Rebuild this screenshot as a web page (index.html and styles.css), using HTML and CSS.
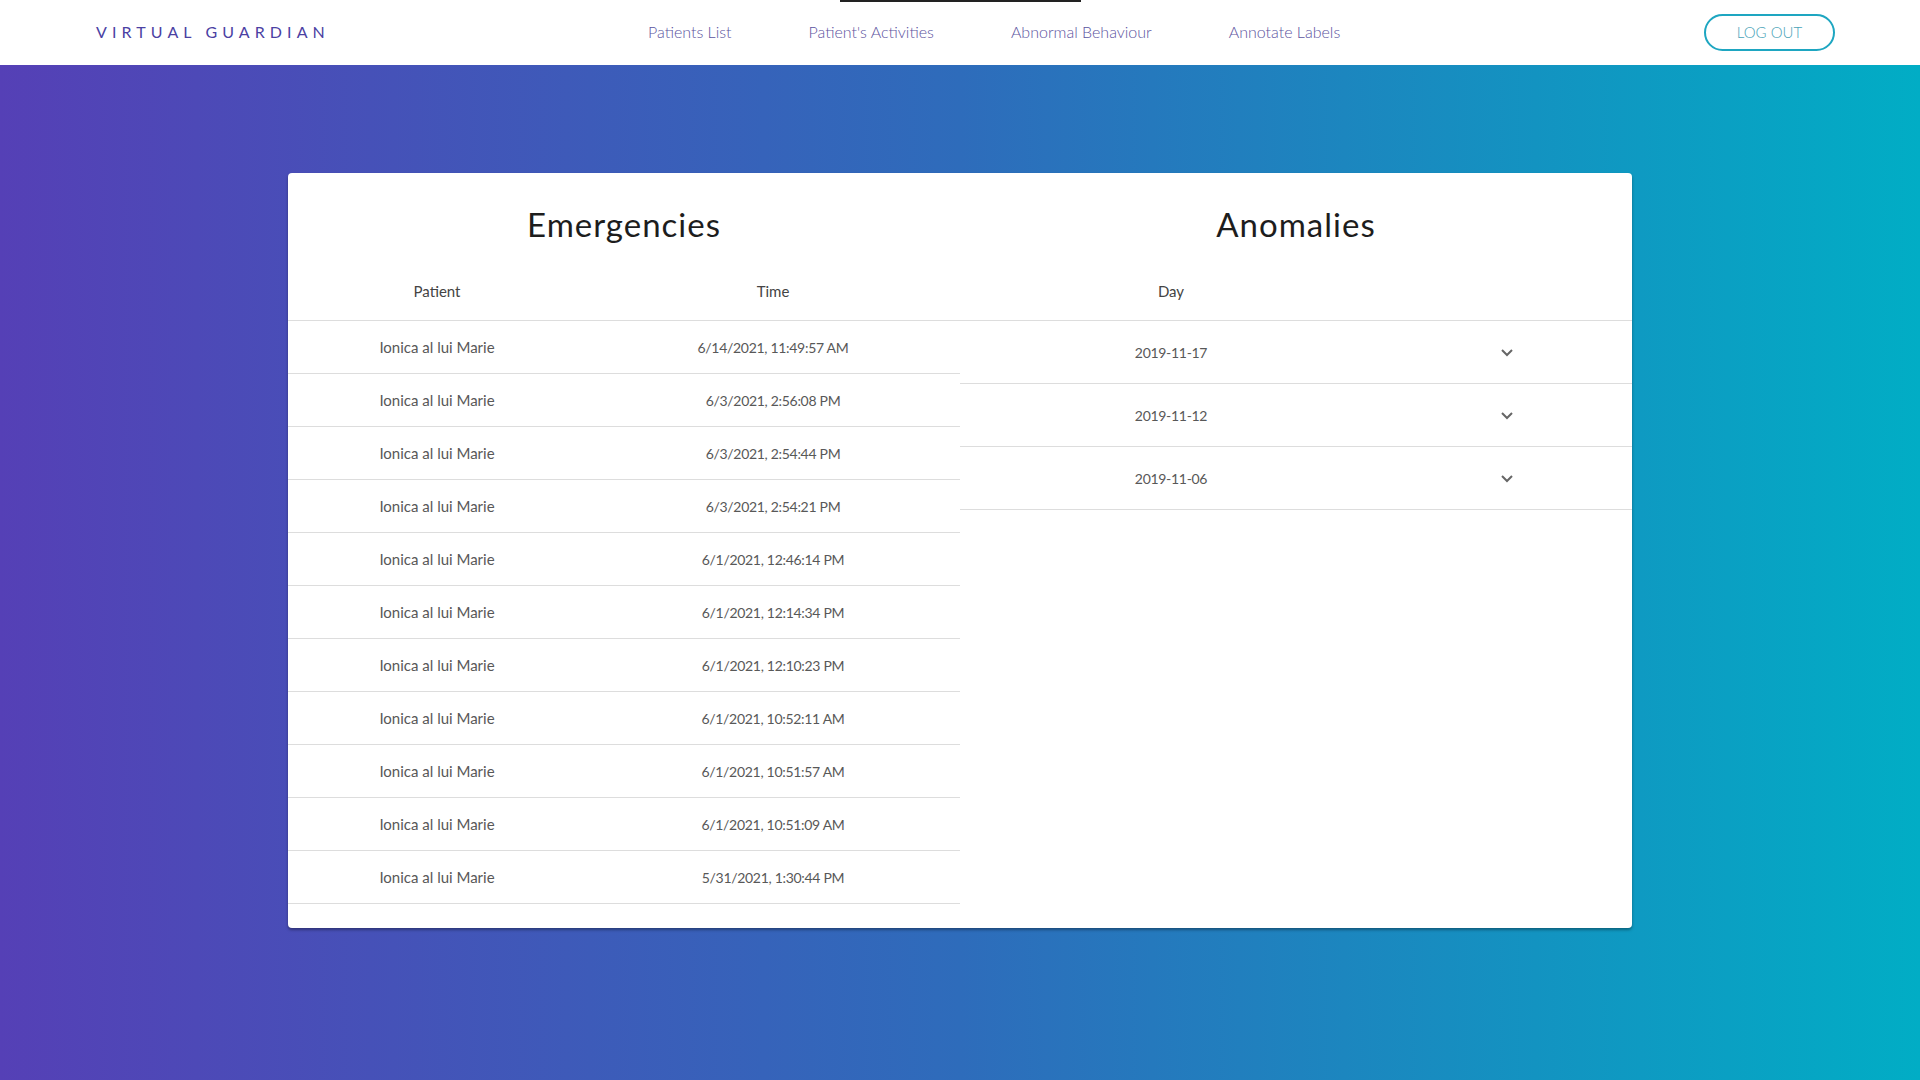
FILE: index.html
```html
<!DOCTYPE html>
<html lang="en">
<head>
<meta charset="utf-8">
<title>Virtual Guardian</title>
<link rel="stylesheet" href="styles.css">
</head>
<body>
<header class="topbar">
  <div class="brand">VIRTUAL GUARDIAN</div>
  <nav class="nav">
    <a class="nav-link">Patients List</a>
    <a class="nav-link">Patient's Activities</a>
    <a class="nav-link">Abnormal Behaviour</a>
    <a class="nav-link">Annotate Labels</a>
  </nav>
  <button class="logout">LOG OUT</button>
  <span class="indicator"></span>
</header>
<main class="stage">
  <section class="card">
    <div class="panel">
      <h2 class="panel-title">Emergencies</h2>
      <div class="etable">
        <div class="erow ehead"><span>Patient</span><span>Time</span></div>
        <div class="erow"><span>Ionica al lui Marie</span><span class="num">6/14/2021, 11:49:57 AM</span></div>
        <div class="erow"><span>Ionica al lui Marie</span><span class="num">6/3/2021, 2:56:08 PM</span></div>
        <div class="erow"><span>Ionica al lui Marie</span><span class="num">6/3/2021, 2:54:44 PM</span></div>
        <div class="erow"><span>Ionica al lui Marie</span><span class="num">6/3/2021, 2:54:21 PM</span></div>
        <div class="erow"><span>Ionica al lui Marie</span><span class="num">6/1/2021, 12:46:14 PM</span></div>
        <div class="erow"><span>Ionica al lui Marie</span><span class="num">6/1/2021, 12:14:34 PM</span></div>
        <div class="erow"><span>Ionica al lui Marie</span><span class="num">6/1/2021, 12:10:23 PM</span></div>
        <div class="erow"><span>Ionica al lui Marie</span><span class="num">6/1/2021, 10:52:11 AM</span></div>
        <div class="erow"><span>Ionica al lui Marie</span><span class="num">6/1/2021, 10:51:57 AM</span></div>
        <div class="erow"><span>Ionica al lui Marie</span><span class="num">6/1/2021, 10:51:09 AM</span></div>
        <div class="erow"><span>Ionica al lui Marie</span><span class="num">5/31/2021, 1:30:44 PM</span></div>
      </div>
    </div>
    <div class="panel">
      <h2 class="panel-title">Anomalies</h2>
      <div class="atable">
        <div class="arow ahead"><span>Day</span><span></span></div>
        <div class="arow"><span class="num">2019-11-17</span><span class="chev"><svg width="14" height="9" viewBox="0 0 14 9"><path d="M2 2 L7 7 L12 2" fill="none" stroke="#666" stroke-width="2"/></svg></span></div>
        <div class="arow"><span class="num">2019-11-12</span><span class="chev"><svg width="14" height="9" viewBox="0 0 14 9"><path d="M2 2 L7 7 L12 2" fill="none" stroke="#666" stroke-width="2"/></svg></span></div>
        <div class="arow"><span class="num">2019-11-06</span><span class="chev"><svg width="14" height="9" viewBox="0 0 14 9"><path d="M2 2 L7 7 L12 2" fill="none" stroke="#666" stroke-width="2"/></svg></span></div>
      </div>
    </div>
  </section>
</main>
</body>
</html>
```
FILE: styles.css
```css
* { box-sizing: border-box; }
html, body { margin: 0; padding: 0; height: 100%; }
body {
  font-family: "Lato", "Liberation Sans", sans-serif;
  min-height: 1080px;
  display: flex;
  flex-direction: column;
  background: linear-gradient(90deg, #5540b6 0%, #2e6cbb 50%, #01adc5 100%);
}
.topbar {
  position: relative;
  height: 65px;
  background: #fff;
  display: flex;
  align-items: center;
  padding: 0 85px 2px 96px;
}
.brand {
  font-size: 16px;
  letter-spacing: 5.1px;
  color: #4b41a3;
  width: 552px;
  font-weight: 400;
}
.nav {
  display: flex;
  align-items: center;
  flex: 1;
}
.nav-link {
  font-size: 16px;
  color: #5b53a0;
  font-weight: 300;
  margin-right: 77px;
}
.logout {
  width: 131px;
  height: 37px;
  border: 2px solid #1ea6c1;
  border-radius: 20px;
  background: #fff;
  color: #4aa3b8;
  font-family: "Lato", sans-serif;
  font-size: 15px;
  font-weight: 300;
  margin-top: 1px;
}
.indicator {
  position: absolute;
  top: 0;
  left: 840px;
  width: 241px;
  height: 2px;
  background: #222;
}
.stage {
  flex: 1;
  padding-top: 108px;
  display: flex;
  justify-content: center;
  align-items: flex-start;
}
.card {
  width: 1344px;
  background: #fff;
  border-radius: 4px;
  box-shadow: 0 2px 3px rgba(0,0,0,0.35);
  display: flex;
  padding: 0 0 24px;
}
.panel { width: 672px; }
.panel-title {
  margin: 0;
  padding-top: 32px;
  height: 88px;
  text-align: center;
  font-size: 33px;
  letter-spacing: 1px;
  font-weight: 400;
  color: #1d1d1d;
  line-height: 38px;
}
.erow, .arow {
  display: grid;
  align-items: center;
  border-bottom: 1px solid #ddd;
  font-size: 15px;
  color: #585858;
  font-weight: 400;
  text-align: center;
}
.num { font-size: 14px; letter-spacing: -0.3px; }
.erow { grid-template-columns: 298px 374px; height: 53px; }
.arow { grid-template-columns: 422px 250px; height: 63px; }
.ehead, .ahead { height: 60px; color: #444; }
.chev { display: flex; justify-content: center; align-items: center; }
.chev svg { display: block; }
```
